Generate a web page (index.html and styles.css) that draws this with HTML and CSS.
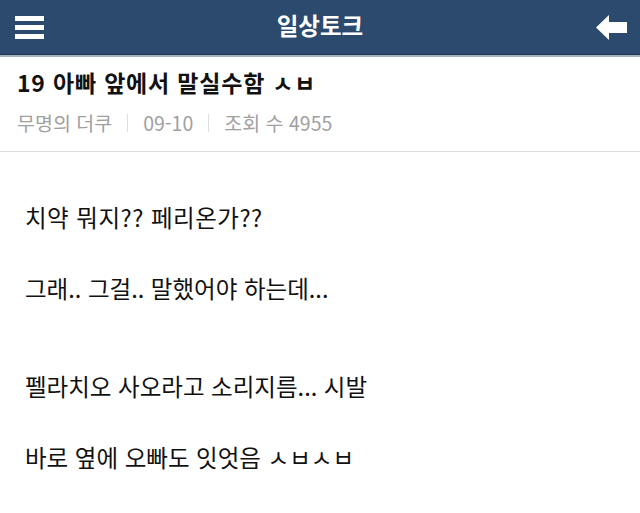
FILE: index.html
```html
<!DOCTYPE html>
<html lang="ko">
<head>
<meta charset="utf-8">
<title>일상토크</title>
<link rel="stylesheet" href="styles.css">
</head>
<body>
<header class="topbar">
  <button class="icon-btn menu" aria-label="메뉴">
    <span class="bar"></span><span class="bar"></span><span class="bar"></span>
  </button>
  <h1 class="topbar-title">일상토크</h1>
  <button class="icon-btn back" aria-label="뒤로">
    <svg width="31" height="25" viewBox="0 0 31 25"><path d="M0 12.5 L13 0 L13 7 L31 7 L31 18 L13 18 L13 25 Z" fill="#fff"/></svg>
  </button>
</header>
<section class="post-head">
  <h2 class="post-title">19 아빠 앞에서 말실수함 ㅅㅂ</h2>
  <div class="post-meta">
    <span>무명의 더쿠</span><span class="sep"></span><span>09-10</span><span class="sep"></span><span>조회 수 4955</span>
  </div>
</section>
<article class="post-body">
  <p class="line wide">치약 뭐지?? 페리온가??</p>
  <p class="line">그래.. 그걸.. 말했어야 하는데...</p>
  <p class="line gap">펠라치오 사오라고 소리지름... 시발</p>
  <p class="line">바로 옆에 오빠도 잇엇음 ㅅㅂㅅㅂ</p>
</article>
</body>
</html>
```
FILE: styles.css
```css
html, body {
  margin: 0;
  padding: 0;
  background: #fff;
  font-family: "Noto Sans CJK KR", "Noto Sans", sans-serif;
}
.topbar {
  height: 54px;
  background: #2c4a6e;
  border-bottom: 1px solid #1e3654;
  box-shadow: 0 2px 0 #a3b1c1;
  display: flex;
  align-items: center;
  justify-content: space-between;
  padding: 0 13px 0 15px;
}
.icon-btn {
  background: none;
  border: 0;
  padding: 0;
  display: flex;
  flex-direction: column;
  cursor: pointer;
}
.menu {
  gap: 4px;
  width: 29px;
  margin-top: 1px;
}
.menu .bar {
  display: block;
  width: 29px;
  height: 5px;
  background: #fff;
}
.back {
  margin-top: 1px;
}
.topbar-title {
  margin: 0 0 4px;
  color: #fff;
  font-size: 23.5px;
  font-weight: bold;
  line-height: 30px;
}
.post-head {
  margin-top: 2px;
  padding: 10px 17px 15px;
  border-bottom: 1px solid #dcdcdc;
}
.post-title {
  margin: 0;
  font-size: 23px;
  font-weight: bold;
  color: #111;
  line-height: 30px;
  letter-spacing: 0.8px;
}
.post-meta {
  margin-top: 13px;
  font-size: 19.5px;
  color: #a0a0a0;
  line-height: 26px;
  display: flex;
  align-items: center;
}
.sep {
  width: 1px;
  height: 18px;
  background: #dedede;
  margin: 0 15px;
}
.post-body {
  padding: 49px 25px 0;
}
.line {
  margin: 0 0 39px;
  font-size: 23.5px;
  line-height: 32px;
  color: #111;
}
.line.wide {
  letter-spacing: 0.5px;
}
.line.gap {
  margin-top: 66px;
}
```
